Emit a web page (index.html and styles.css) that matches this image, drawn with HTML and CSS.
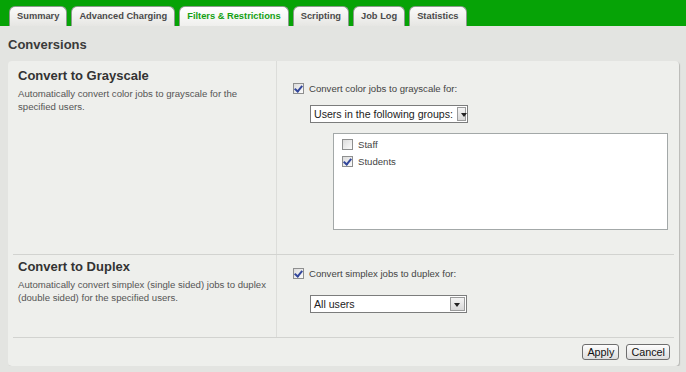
FILE: index.html
```html
<!DOCTYPE html>
<html lang="en">
<head>
    <meta charset="UTF-8">
    <title>Filters &amp; Restrictions</title>
    <link rel="stylesheet" href="styles.css">
</head>
<body>
    <div class="tabbar">
        <a class="tab">Summary</a>
        <a class="tab">Advanced Charging</a>
        <a class="tab active">Filters &amp; Restrictions</a>
        <a class="tab">Scripting</a>
        <a class="tab">Job Log</a>
        <a class="tab">Statistics</a>
    </div>

    <h2 class="page-title">Conversions</h2>

    <div class="panel">
        <div class="row row-grayscale">
            <div class="info">
                <h3>Convert to Grayscale</h3>
                <p>Automatically convert color jobs to grayscale for the specified users.</p>
            </div>
            <div class="options">
                <label class="check"><span class="cb checked"></span>Convert color jobs to grayscale for:</label>
                <div class="select short"><span class="value">Users in the following groups:</span><span class="arrow"></span></div>
                <div class="listbox">
                    <label class="check"><span class="cb"></span>Staff</label>
                    <label class="check"><span class="cb checked"></span>Students</label>
                </div>
            </div>
        </div>

        <div class="row row-duplex">
            <div class="info">
                <h3>Convert to Duplex</h3>
                <p>Automatically convert simplex (single sided) jobs to duplex (double sided) for the specified users.</p>
            </div>
            <div class="options">
                <label class="check"><span class="cb checked"></span>Convert simplex jobs to duplex for:</label>
                <div class="select wide"><span class="value">All users</span><span class="arrow"></span></div>
            </div>
        </div>

        <div class="actions">
            <button>Apply</button>
            <button>Cancel</button>
        </div>
    </div>
</body>
</html>
```

FILE: styles.css
```css
body {
    margin: 0;
    background: #e3e4e1;
    font-family: "Liberation Sans", Arial, sans-serif;
    color: #333;
}

.tabbar {
    display: flex;
    gap: 4px;
    height: 26px;
    padding: 6px 0 0 9px;
    box-sizing: border-box;
    background: #06a306;
}
.tab {
    height: 20px;
    padding: 0 7px;
    box-sizing: border-box;
    border: 1px solid #8c9a8c;
    border-bottom: none;
    border-radius: 6px 6px 0 0;
    background: linear-gradient(#fbfbfa, #e6e6e3);
    font-size: 9.3px;
    font-weight: bold;
    line-height: 19px;
    color: #4a4a4a;
}
.tab.active {
    background: linear-gradient(#ffffff, #efefed);
    color: #12a012;
}

.page-title {
    margin: 0;
    padding: 11px 0 0 8px;
    height: 35px;
    box-sizing: border-box;
    font-size: 13px;
    color: #3a3a3a;
}

.panel {
    margin: 0 7px 0 8px;
    padding: 0 5px;
    height: 305px;
    box-sizing: border-box;
    background: #eeefec;
    border-radius: 4px;
    box-shadow: 1px 1px 1px #b8b9b6;
}

.row {
    display: grid;
    grid-template-columns: 264px 1fr;
    border-bottom: 1px solid #d2d3d0;
}
.row-grayscale { height: 193px; }
.row-duplex { height: 82px; }

.info {
    border-right: 1px solid #dcddda;
    padding: 7px 5px;
}
.info h3 {
    margin: 0 0 5px;
    font-size: 13px;
    color: #333;
}
.info p {
    margin: 0;
    font-size: 9.6px;
    line-height: 12.5px;
    color: #555;
}
.row-duplex .info { padding-top: 4px; }

.options {
    padding: 20px 6px 0 16px;
}
.row-duplex .options { padding-top: 11px; }

.check {
    display: flex;
    align-items: center;
    gap: 5px;
    font-size: 9.6px;
    color: #444;
    height: 14px;
}
.cb {
    width: 9px;
    height: 9px;
    border: 1px solid #8e8f8f;
    background: linear-gradient(135deg, #dcdcdc, #fbfbfb);
    position: relative;
}
.cb.checked::after {
    content: "";
    position: absolute;
    left: 2px;
    top: 0px;
    width: 3px;
    height: 6px;
    border: solid #33479b;
    border-width: 0 2px 2px 0;
    transform: rotate(40deg);
}

.select {
    display: flex;
    height: 18px;
    box-sizing: border-box;
    margin: 10px 0 0 17px;
    border: 1px solid #7b7c7c;
    background: #fff;
    font-size: 10.6px;
    color: #222;
}
.select.short { width: 158px; }
.select.wide { width: 157px; margin-top: 15px; }
.select .value {
    flex: 1;
    padding: 0 3px;
    line-height: 16px;
    white-space: nowrap;
}
.select .arrow {
    width: 13px;
    margin: 1px;
    border: 1px solid #9a9b9b;
    background: linear-gradient(#f4f4f4, #d8d8d8);
    position: relative;
}
.select .arrow::after {
    content: "";
    position: absolute;
    left: 3px;
    top: 5px;
    border: 3px solid transparent;
    border-top: 4px solid #222;
    border-bottom: none;
}

.listbox {
    margin: 10px 0 0 40px;
    height: 97px;
    box-sizing: border-box;
    border: 1px solid #a3a8a8;
    background: #fff;
    padding: 3px 8px;
    display: flex;
    flex-direction: column;
    gap: 3px;
}

.actions {
    display: flex;
    justify-content: flex-end;
    gap: 7px;
    padding: 6px 4px 0 0;
}
button {
    height: 16px;
    padding: 0 4px;
    border: 1px solid #6e6e6e;
    border-radius: 3px;
    background: linear-gradient(#fdfdfd, #dedede);
    font-family: "Liberation Sans", Arial, sans-serif;
    font-size: 10.8px;
    color: #111;
    line-height: 14px;
}
```
